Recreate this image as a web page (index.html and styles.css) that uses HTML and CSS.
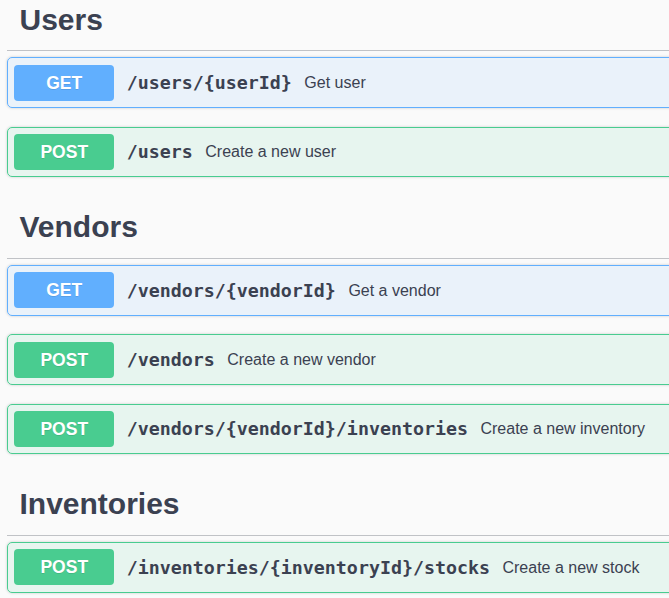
FILE: index.html
```html
<!DOCTYPE html>
<html lang="en">
<head>
<meta charset="utf-8">
<title>API</title>
<link rel="stylesheet" href="styles.css">
</head>
<body>
<div class="page">
  <section class="tag-section">
    <h3 class="tag">Users</h3>
    <div class="opblock get">
      <span class="method">GET</span>
      <span class="path">/users/{userId}</span>
      <span class="desc">Get user</span>
    </div>
    <div class="opblock post">
      <span class="method">POST</span>
      <span class="path">/users</span>
      <span class="desc">Create a new user</span>
    </div>
  </section>
  <section class="tag-section">
    <h3 class="tag">Vendors</h3>
    <div class="opblock get">
      <span class="method">GET</span>
      <span class="path">/vendors/{vendorId}</span>
      <span class="desc">Get a vendor</span>
    </div>
    <div class="opblock post">
      <span class="method">POST</span>
      <span class="path">/vendors</span>
      <span class="desc">Create a new vendor</span>
    </div>
    <div class="opblock post">
      <span class="method">POST</span>
      <span class="path">/vendors/{vendorId}/inventories</span>
      <span class="desc">Create a new inventory</span>
    </div>
  </section>
  <section class="tag-section">
    <h3 class="tag">Inventories</h3>
    <div class="opblock post">
      <span class="method">POST</span>
      <span class="path">/inventories/{inventoryId}/stocks</span>
      <span class="desc">Create a new stock</span>
    </div>
  </section>
</div>
</body>
</html>
```

FILE: styles.css
```css
html, body {
  margin: 0;
  padding: 0;
  background: #fafafa;
  overflow: hidden;
}

body {
  font-family: "Liberation Sans", Arial, sans-serif;
  color: #3b4151;
}

.page {
  margin: -12px 0 0 7px;
  width: 720px;
}

.tag-section {
  display: flex;
  flex-direction: column;
}

.tag {
  margin: 0 0 6.25px;
  padding: 12.5px 25px 12.5px 12.5px;
  font-size: 30px;
  line-height: 37px;
  font-weight: 700;
  color: #3b4151;
  border-bottom: 1px solid rgba(59, 65, 81, 0.3);
}

.opblock {
  display: flex;
  align-items: center;
  padding: 6.25px;
  margin: 0 0 18.75px;
  border: 1px solid;
  border-radius: 5px;
  box-shadow: 0 0 3px rgba(0, 0, 0, 0.19);
}

.opblock.get {
  background: rgba(97, 175, 254, 0.1);
  border-color: #61affe;
}

.opblock.post {
  background: rgba(73, 204, 144, 0.1);
  border-color: #49cc90;
}

.method {
  box-sizing: border-box;
  width: 100px;
  height: 36px;
  line-height: 36px;
  text-align: center;
  border-radius: 4px;
  font-size: 17.5px;
  font-weight: 700;
  color: #fff;
  text-shadow: 0 1px 0 rgba(0, 0, 0, 0.1);
}

.get .method { background: #61affe; }
.post .method { background: #49cc90; }

.path {
  padding: 0 12.5px;
  font-family: "DejaVu Sans Mono", "Liberation Mono", monospace;
  font-weight: 700;
  font-size: 18.3px;
  color: #3b4151;
}

.desc {
  font-size: 16px;
  padding-top: 1px;
  color: #3b4151;
}
```
